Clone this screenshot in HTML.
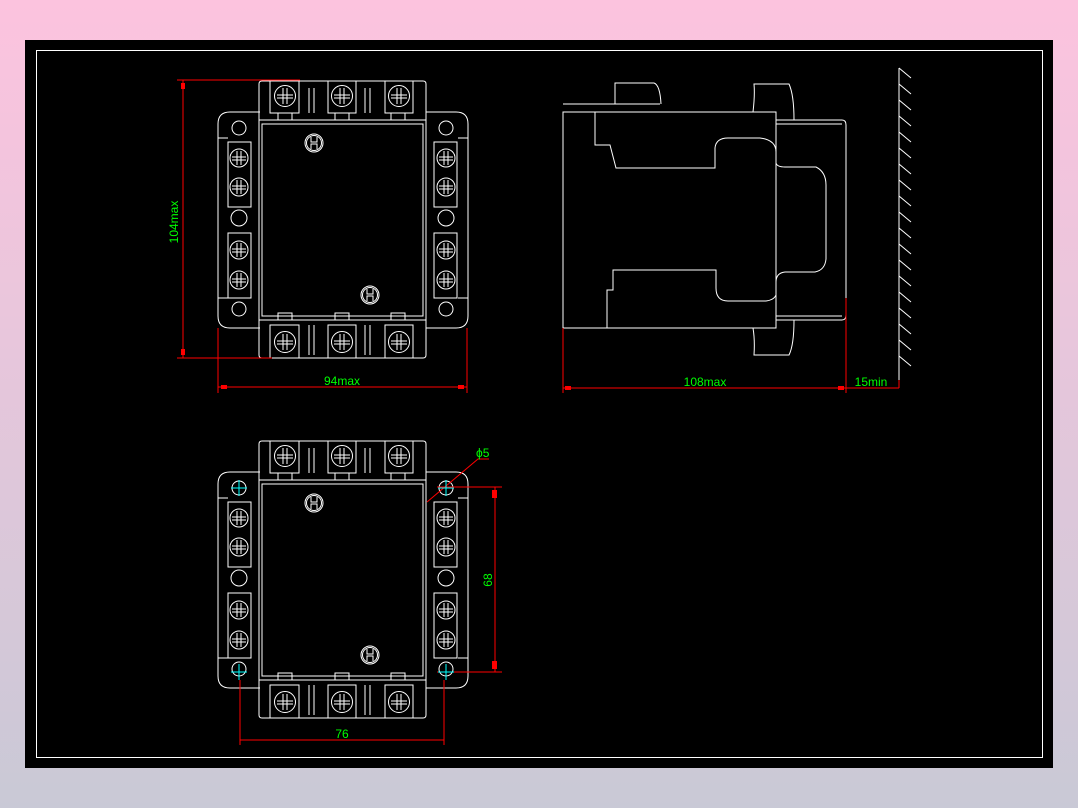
<!DOCTYPE html>
<html><head><meta charset="utf-8"><style>
html,body{margin:0;padding:0;width:1078px;height:808px;overflow:hidden;background:linear-gradient(#fcc3de 0%,#e9c6dc 40%,#c9c9d6 100%);}
svg{position:absolute;left:0;top:0}
text{font-family:"Liberation Sans",sans-serif;fill:#00ff00;font-size:12px}
</style></head><body>
<svg width="1078" height="808" viewBox="0 0 1078 808">
<rect x="25" y="40" width="1028" height="728" fill="#000"/>
<rect x="36.5" y="50.5" width="1006" height="707" fill="none" stroke="#fff" stroke-width="1"/>
<defs>
<g id="sc"><circle r="10.5" fill="none" stroke="#fff"/><path d="M-2 -8V8M2 -8V8M-8 -1H8M-8 2H8" stroke="#fff" fill="none"/></g>
<g id="ss"><circle r="9" fill="none" stroke="#fff"/><path d="M-2 -7V7M2 -7V7M-7 -1H7M-7 2H7" stroke="#fff" fill="none"/></g>
<g id="tm"><circle r="9" fill="none" stroke="#fff"/><circle r="7.5" fill="none" stroke="#fff"/><path d="M-3 -6V-1H3V-6M-3 6V1H3V6" stroke="#fff" fill="none"/></g>
<g id="front" stroke="#fff" fill="none" stroke-width="1">
<path d="M260 112H230Q218 112 218 124V316Q218 328 230 328H260"/>
<path d="M426 112H456Q468 112 468 124V316Q468 328 456 328H426"/>
<path d="M218 138H228M218 298H228M468 138H458M468 298H458"/>
<rect x="259" y="120" width="167" height="200"/>
<rect x="262" y="124" width="161" height="192"/>
<path d="M259 120V84Q259 81 262 81H423Q426 81 426 84V120"/>
<path d="M259 320V355Q259 358 262 358H423Q426 358 426 355V320"/>
<rect x="270" y="81" width="29" height="32"/><rect x="328" y="81" width="28" height="32"/><rect x="385" y="81" width="28" height="32"/>
<rect x="278" y="113" width="14" height="7"/><rect x="335" y="113" width="14" height="7"/><rect x="391" y="113" width="14" height="7"/>
<path d="M309 88V113M314 88V113M365 88V113M370 88V113"/>
<rect x="270" y="325" width="29" height="33"/><rect x="328" y="325" width="28" height="33"/><rect x="385" y="325" width="28" height="33"/>
<rect x="278" y="313" width="14" height="7"/><rect x="335" y="313" width="14" height="7"/><rect x="391" y="313" width="14" height="7"/>
<path d="M309 325V355M314 325V355M365 325V355M370 325V355"/>
<rect x="228" y="142" width="23" height="65"/><rect x="228" y="233" width="23" height="65"/>
<rect x="434" y="142" width="23" height="65"/><rect x="434" y="233" width="23" height="65"/>
<circle cx="239" cy="128" r="7"/><circle cx="239" cy="218" r="8"/><circle cx="239" cy="309" r="7"/>
<circle cx="446" cy="128" r="7"/><circle cx="446" cy="218" r="8"/><circle cx="446" cy="309" r="7"/>
<use href="#sc" x="285" y="96"/><use href="#sc" x="342" y="96"/><use href="#sc" x="399" y="96"/>
<use href="#sc" x="285" y="342"/><use href="#sc" x="342" y="342"/><use href="#sc" x="399" y="342"/>
<use href="#ss" x="239" y="158"/><use href="#ss" x="239" y="187"/><use href="#ss" x="239" y="250"/><use href="#ss" x="239" y="280"/>
<use href="#ss" x="446" y="158"/><use href="#ss" x="446" y="187"/><use href="#ss" x="446" y="250"/><use href="#ss" x="446" y="280"/>
<use href="#tm" x="314" y="143"/><use href="#tm" x="370" y="295"/>
</g>
</defs>
<use href="#front"/>
<use href="#front" y="360"/>
<!-- side view -->
<g stroke="#fff" fill="none">
<rect x="563" y="112" width="213" height="216"/>
<path d="M563 104H660M615 104V83H654Q660 85 661 104"/>
<path d="M753 112Q755 95 754 84H789Q794 95 794 120"/>
<path d="M753 328Q755 340 754 355H789Q794 345 794 320"/>
<path d="M776 120H842Q846 120 846 125V315Q846 320 842 320H776"/>
<path d="M776 124H842M776 316H842"/>
<path d="M595 112V145H610L616 168H715V148Q716 138 728 138H760Q776 140 776 152V163Q777 167 785 167H816Q826 172 826 185V259Q825 270 815 272H785Q776 273 776 282V295Q774 300 766 301H728Q716 301 716 288V270H613V290H607V328"/>
</g>
<g stroke="#fff" fill="none">
<path d="M899 68V380"/>
<path d="M899 68l12 10M899 84l12 10M899 100l12 10M899 116l12 10M899 132l12 10M899 148l12 10M899 164l12 10M899 180l12 10M899 196l12 10M899 212l12 10M899 228l12 10M899 244l12 10M899 260l12 10M899 276l12 10M899 292l12 10M899 308l12 10M899 324l12 10M899 340l12 10M899 356l12 10"/>
</g>
<!-- dims -->
<g stroke="#f00" fill="none">
<path d="M183 80V358M177 80H300M177 358H272"/>
<path d="M218 328V393M467 328V393M218 387H467"/>
<path d="M563 328V393M846 298V393M563 388H899M899 380V388"/>
<path d="M495 487V672M437 487H502M437 672H502"/>
<path d="M240 680V745M444 680V745M240 740H444"/>
<path d="M427 502L478 459H489"/>
</g>
<g fill="#f00"><rect x="181" y="83" width="4" height="6"/><rect x="181" y="349" width="4" height="6"/><rect x="221" y="385" width="6" height="4"/><rect x="458" y="385" width="6" height="4"/><rect x="565" y="386" width="6" height="4"/><rect x="838" y="386" width="6" height="4"/><rect x="492" y="490" width="5" height="8"/><rect x="492" y="661" width="5" height="8"/></g>
<g stroke="#0ff"><path d="M231 488H247M239 480V496M438 488H454M446 480V496M231 672H247M239 664V680M438 672H454M446 664V680"/></g>
<text x="178" y="222" transform="rotate(-90 178 222)" text-anchor="middle">104max</text>
<text x="342" y="385" text-anchor="middle">94max</text>
<text x="705" y="386" text-anchor="middle">108max</text>
<text x="871" y="386" text-anchor="middle">15min</text>
<text x="492" y="580" transform="rotate(-90 492 580)" text-anchor="middle">68</text>
<text x="342" y="738" text-anchor="middle">76</text>
<text x="476" y="457">ϕ5</text>
</svg>
</body></html>
